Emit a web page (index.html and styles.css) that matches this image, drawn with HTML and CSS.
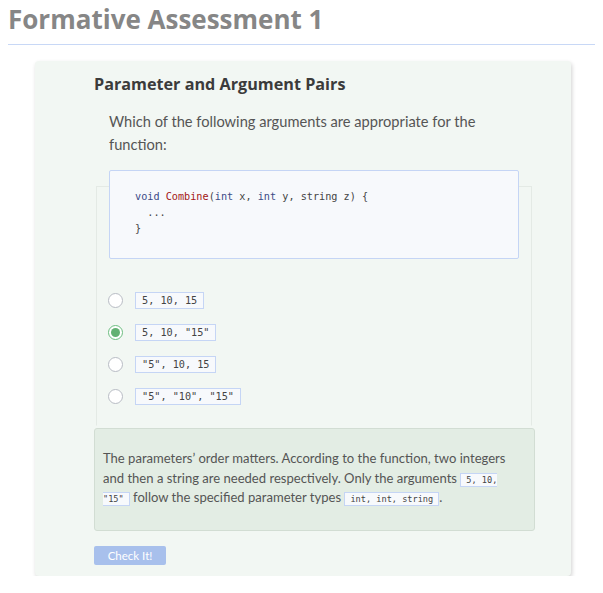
FILE: index.html
```html
<!DOCTYPE html>
<html>
<head>
<meta charset="utf-8">
<link rel="stylesheet" href="styles.css">
</head>
<body>
<header class="page-head">
  <h1 class="title">Formative Assessment 1</h1>
</header>
<section class="card">
  <h2 class="q-title">Parameter and Argument Pairs</h2>
  <div class="prompt">
    <p class="prompt-text">Which of the following arguments are appropriate for the function:</p>
    <pre class="code"><span class="kw">void</span> <span class="fn">Combine</span>(<span class="kw">int</span> x, <span class="kw">int</span> y, string z) {
  ...
}</pre>
  </div>
  <div class="options">
    <label class="option"><span class="radio"></span><code class="lbl">5, 10, 15</code></label>
    <label class="option"><span class="radio checked"></span><code class="lbl">5, 10, "15"</code></label>
    <label class="option"><span class="radio"></span><code class="lbl">"5", 10, 15</code></label>
    <label class="option"><span class="radio"></span><code class="lbl">"5", "10", "15"</code></label>
  </div>
  <div class="feedback">
    <p>The parameters’ order matters. According to the function, two integers and then a string are needed respectively. Only the arguments <code class="ic">5, 10, "15"</code> follow the specified parameter types <code class="ic">int, int, string</code>.</p>
  </div>
  <button class="check">Check It!</button>
</section>
</body>
</html>
```
FILE: styles.css
```css
html, body {
  margin: 0;
  padding: 0;
  background: #fff;
}
body {
  padding: 0 8px;
  font-family: Lato, "Noto Sans", sans-serif;
}
.page-head {
  border-bottom: 1px solid #c8d8f6;
  height: 44px;
}
.title {
  margin: 0;
  padding-top: 2px;
  font-family: "Open Sans", "Noto Sans", sans-serif;
  font-size: 26px;
  line-height: 34px;
  font-weight: 700;
  color: #868686;
}
.card {
  margin: 16px 0 0 27px;
  width: 536px;
  box-sizing: border-box;
  background: #f2f7f3;
  border-radius: 4px;
  box-shadow: 1px 2px 4px rgba(0,0,0,0.18);
  padding: 12px 36px 11px 59px;
}
.q-title {
  margin: 0;
  font-family: "Open Sans", "Noto Sans", sans-serif;
  font-size: 16.2px;
  line-height: 22px;
  font-weight: 700;
  color: #3b3b3b;
}
.prompt {
  margin: 15px 0 0 15px;
  width: 410px;
  position: relative;
  z-index: 1;
}
.prompt-text {
  margin: 0;
  font-size: 14.65px;
  line-height: 23px;
  color: #555;
}
.code {
  margin: 14px 0 0 0;
  background: #f7f9fc;
  border: 1px solid #c5d5f5;
  border-radius: 2px;
  padding: 18px 25px 21px;
  font-family: "DejaVu Sans Mono", monospace;
  font-size: 10.2px;
  line-height: 16px;
  color: #444;
}
.kw { color: #3b4a86; }
.fn { color: #a31515; }
.options {
  margin: -73px 0 0 2px;
  width: 436px;
  box-sizing: border-box;
  border: 1px solid #e4eae5;
  border-bottom-color: #f2f7f3;
  padding: 103px 0 19px 11px;
  display: flex;
  flex-direction: column;
  gap: 12px;
}
.option {
  display: flex;
  align-items: center;
  gap: 12px;
  height: 20px;
}
.radio {
  width: 15px;
  height: 15px;
  box-sizing: border-box;
  border-radius: 50%;
  border: 1px solid #b8bcc4;
  background: #fff;
  position: relative;
}
.radio.checked {
  border-color: #6cbd80;
  background: #fff;
}
.radio.checked::after {
  content: "";
  position: absolute;
  left: 2px;
  top: 2px;
  width: 9px;
  height: 9px;
  border-radius: 50%;
  background: #63b173;
}
.lbl {
  font-family: "DejaVu Sans Mono", monospace;
  font-size: 10.2px;
  line-height: 13px;
  padding: 1px 6px;
  background: #f7f9fc;
  border: 1px solid #c5d5f5;
  color: #444;
}
.feedback {
  margin-top: 2px;
  background: #e3ede4;
  border: 1px solid #d2ddd3;
  border-radius: 3px;
  padding: 20px 10px 22px 8px;
}
.feedback p {
  margin: 0;
  font-size: 13.05px;
  line-height: 19.5px;
  color: #555;
}
.ic {
  font-family: "DejaVu Sans Mono", monospace;
  font-size: 8.6px;
  line-height: 10px;
  padding: 1px 5px;
  background: #f7f9fc;
  border: 1px solid #c5d5f5;
  color: #444;
}
.check {
  margin-top: 15px;
  display: block;
  width: 72px;
  height: 19px;
  padding: 0;
  border: none;
  border-radius: 2px;
  background: #a8c0ec;
  color: #fff;
  font-family: Lato, "Noto Sans", sans-serif;
  font-size: 11.5px;
}
```
